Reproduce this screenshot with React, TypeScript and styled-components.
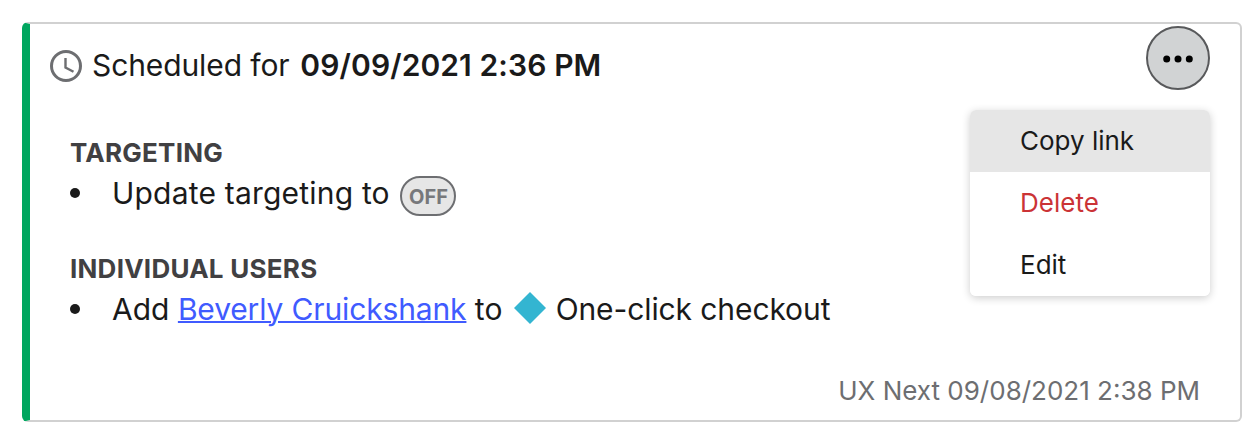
import React from "react";
import styled, { createGlobalStyle } from "styled-components";

const Global = createGlobalStyle`
  *{box-sizing:border-box}
  body{margin:0;background:#fff;font-family:Inter,sans-serif;color:#1a1a1a}
`;
const Page = styled.main`
  padding:22px 18px 14px 22px;
  height:436px;
`;
const Card = styled.article`
  position:relative;
  height:400px;
  border:2px solid #d1d1d1;
  border-left:8px solid #00a65f;
  border-radius:6px;
  padding:24px 40px 0 20px;
  display:flex;
  flex-direction:column;
`;
const Header = styled.header`
  display:flex;
  align-items:center;
  height:36px;
  font-size:30px;
  line-height:36px;
  white-space:pre;
`;
const Text = styled.span<{ $spacing?: number; $weight?: number }>`
  letter-spacing:${p => p.$spacing ?? 0}px;
  font-weight:${p => p.$weight ?? 400};
`;
const HeaderText = styled.span`
  display:flex;
  gap:2.5px;
  margin:-2px 0 0 10px;
`;
const Section = styled.section<{ $top: number }>`
  margin:${p => p.$top}px 0 0 20px;
`;
const Heading = styled.h2`
  margin:0;
  font-size:26px;
  line-height:32px;
  font-weight:700;
  letter-spacing:.25px;
  color:#414042;
`;
const Item = styled.div`
  display:flex;
  align-items:center;
  height:48px;
  font-size:30px;
  white-space:pre;
`;
const Dot = styled.span`
  width:10px;
  height:10px;
  margin-right:32px;
  border-radius:50%;
  background:#1a1a1a;
`;
const Off = styled.span`
  display:flex;
  align-items:center;
  justify-content:center;
  width:56px;
  height:40px;
  margin:6px 0 0 2px;
  padding-top:2px;
  border:2px solid #6d6e71;
  border-radius:20px;
  background:#e6e6e6;
  color:#77787b;
  font-size:20px;
  font-weight:700;
`;
const Diamond = styled.svg`
  margin-left:2.5px;
`;
const Link = styled.a`
  color:#405bff;
  letter-spacing:-.14px;
  text-decoration:underline;
  text-decoration-thickness:2px;
`;
const Footer = styled.footer`
  margin-top:42px;
  text-align:right;
  font-size:26px;
  line-height:32px;
  color:#6d6e71;
`;
const More = styled.button`
  position:absolute;
  top:2px;
  right:30px;
  width:64px;
  height:64px;
  padding:0;
  border:2px solid #58595b;
  border-radius:50%;
  background:#d1d3d4;
`;
const Menu = styled.nav`
  position:absolute;
  top:86px;
  right:30px;
  width:240px;
  border-radius:6px;
  overflow:hidden;
  background:#fff;
  box-shadow:0 2px 8px rgba(0,0,0,.2);
`;
const MenuItem = styled.div<{ $active?: boolean; $danger?: boolean }>`
  height:62px;
  padding-left:50px;
  font-size:26px;
  line-height:62px;
  background:${p => (p.$active ? "#e6e6e6" : "#fff")};
  color:${p => (p.$danger ? "#cb3336" : "#1a1a1a")};
`;

export default function App() {
  return (
    <Page>
      <Global />
      <Card>
        <Header>
          <svg width="32" height="32" viewBox="0 0 32 32" fill="none" stroke="#6d6e71">
            <circle cx="16" cy="16" r="14.5" strokeWidth="3" />
            <path d="M15.5 8v9.5l8 4.3" strokeWidth="2.4" />
          </svg>
          <HeaderText>
            <Text $spacing={-0.1}>Scheduled for </Text>
            <Text $weight={600} $spacing={0.1}>09/09/2021 2:36 PM</Text>
          </HeaderText>
        </Header>
        <Section $top={53}>
          <Heading>TARGETING</Heading>
          <Item><Dot /><Text $spacing={0.2}>Update targeting to </Text><Off>OFF</Off></Item>
        </Section>
        <Section $top={36}>
          <Heading>INDIVIDUAL USERS</Heading>
          <Item>
            <Dot />
            <Text>Add <Link>Beverly Cruickshank</Link> to </Text>
            <Diamond width="34" height="34" viewBox="0 0 34 34"><path d="M17 0l16 16-16 16L1 16z" fill="#33b5d1" /></Diamond>
            <Text $spacing={-0.1}> One-click checkout</Text>
          </Item>
        </Section>
        <Footer>UX Next 09/08/2021 2:38 PM</Footer>
        <More aria-label="More actions">
          <svg width="60" height="60" viewBox="0 0 60 60"><circle cx="18.7" cy="31" r="3.5" /><circle cx="30" cy="31" r="3.5" /><circle cx="41.3" cy="31" r="3.5" /></svg>
        </More>
        <Menu>
          <MenuItem $active>Copy link</MenuItem>
          <MenuItem $danger>Delete</MenuItem>
          <MenuItem>Edit</MenuItem>
        </Menu>
      </Card>
    </Page>
  );
}
